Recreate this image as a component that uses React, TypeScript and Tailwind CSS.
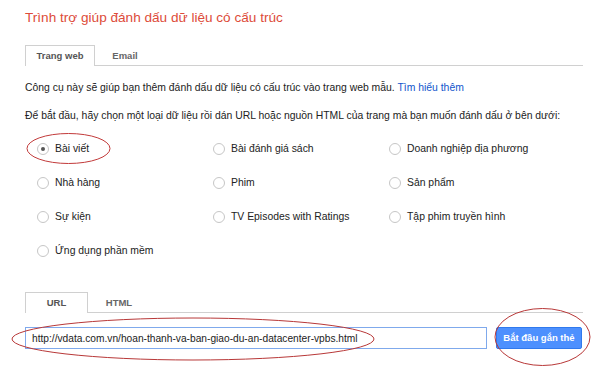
import { useState } from 'react';

const options = [
    'Bài viết',
    'Bài đánh giá sách',
    'Doanh nghiệp địa phương',
    'Nhà hàng',
    'Phim',
    'Sản phẩm',
    'Sự kiện',
    'TV Episodes with Ratings',
    'Tập phim truyền hình',
    'Ứng dụng phần mềm',
];

// Вкладки в стиле старых сервисов Google
const Tabs = ({ items, active, onSelect, widths }: { items: string[]; active: number; onSelect: (i: number) => void; widths: string[] }) => (
    <div className="flex h-[21px] border-b border-[#d0d0d0] w-[558px]">
        {items.map((t, i) => (
            <button
                key={t}
                onClick={() => onSelect(i)}
                className={`${widths[i]} h-[21px] text-[9.5px] font-bold text-center leading-[20px] ${
                    i === active
                        ? 'bg-white border border-b-0 border-[#d0d0d0] text-[#555] relative z-10'
                        : 'text-[#666]'
                }`}
            >
                {t}
            </button>
        ))}
    </div>
);

export default function App() {
    const [tab, setTab] = useState(0);
    const [srcTab, setSrcTab] = useState(0);
    const [selected, setSelected] = useState(0);
    const [url, setUrl] = useState('http://vdata.com.vn/hoan-thanh-va-ban-giao-du-an-datacenter-vpbs.html');

    return (
        <div className="relative w-[600px] h-[376px] bg-white overflow-hidden text-[#222]" style={{ fontFamily: '"Liberation Sans", Arial, sans-serif' }}>
            <div className="pl-[25px]">
                <h1 className="pt-[8px] text-[13.6px] leading-[20px] text-[#dd4b39]">Trình trợ giúp đánh dấu dữ liệu có cấu trúc</h1>

                <div className="mt-[17px]">
                    <Tabs items={['Trang web', 'Email']} active={tab} onSelect={setTab} widths={['w-[70px]', 'w-[60px]']} />
                </div>

                <p className="mt-[15px] text-[10.4px] leading-[14px]">
                    Công cụ này sẽ giúp bạn thêm đánh dấu dữ liệu có cấu trúc vào trang web mẫu.{' '}
                    <a className="text-[#1155cc]">Tìm hiểu thêm</a>
                </p>
                <p className="mt-[14px] text-[10.4px] leading-[14px]">
                    Để bắt đầu, hãy chọn một loại dữ liệu rồi dán URL hoặc nguồn HTML của trang mà bạn muốn đánh dấu ở bên dưới:
                </p>

                <div className="mt-[9px] ml-[12px] grid grid-cols-[176px_176px_176px]">
                    {options.map((o, i) => (
                        <label key={o} className="h-[34px] flex items-center gap-[6px] text-[10.4px] cursor-pointer" onClick={() => setSelected(i)}>
                            <span className="w-[12px] h-[12px] rounded-full border border-[#c6c6c6] bg-white flex items-center justify-center">
                                {selected === i && <span className="w-[4px] h-[4px] rounded-full bg-[#555]" />}
                            </span>
                            {o}
                        </label>
                    ))}
                </div>

                <div className="mt-[24px]">
                    <Tabs items={['URL', 'HTML']} active={srcTab} onSelect={setSrcTab} widths={['w-[63px]', 'w-[62px]']} />
                </div>

                <div className="mt-[14px] flex items-center gap-[9px]">
                    <input
                        value={url}
                        onChange={(e) => setUrl(e.target.value)}
                        className="w-[462px] h-[22px] border border-[#7fa9ec] px-[6px] text-[10.2px] outline-none"
                    />
                    <button className="w-[86px] h-[22px] bg-[#4d90fe] border border-[#3079ed] rounded-[2px] text-white text-[9.5px] font-bold">
                        Bắt đầu gắn thẻ
                    </button>
                </div>
            </div>

            {/* Красные пометки поверх скриншота */}
            <svg className="absolute inset-0 pointer-events-none" width="600" height="376">
                <ellipse cx="68.5" cy="148.5" rx="41.5" ry="15" fill="none" stroke="#c23a3a" strokeWidth="1" />
                <ellipse cx="193" cy="339" rx="181" ry="21" fill="none" stroke="#b83838" strokeWidth="1" />
                <ellipse cx="542.5" cy="337" rx="47.5" ry="28.5" fill="none" stroke="#b83838" strokeWidth="1" />
            </svg>
        </div>
    );
}
